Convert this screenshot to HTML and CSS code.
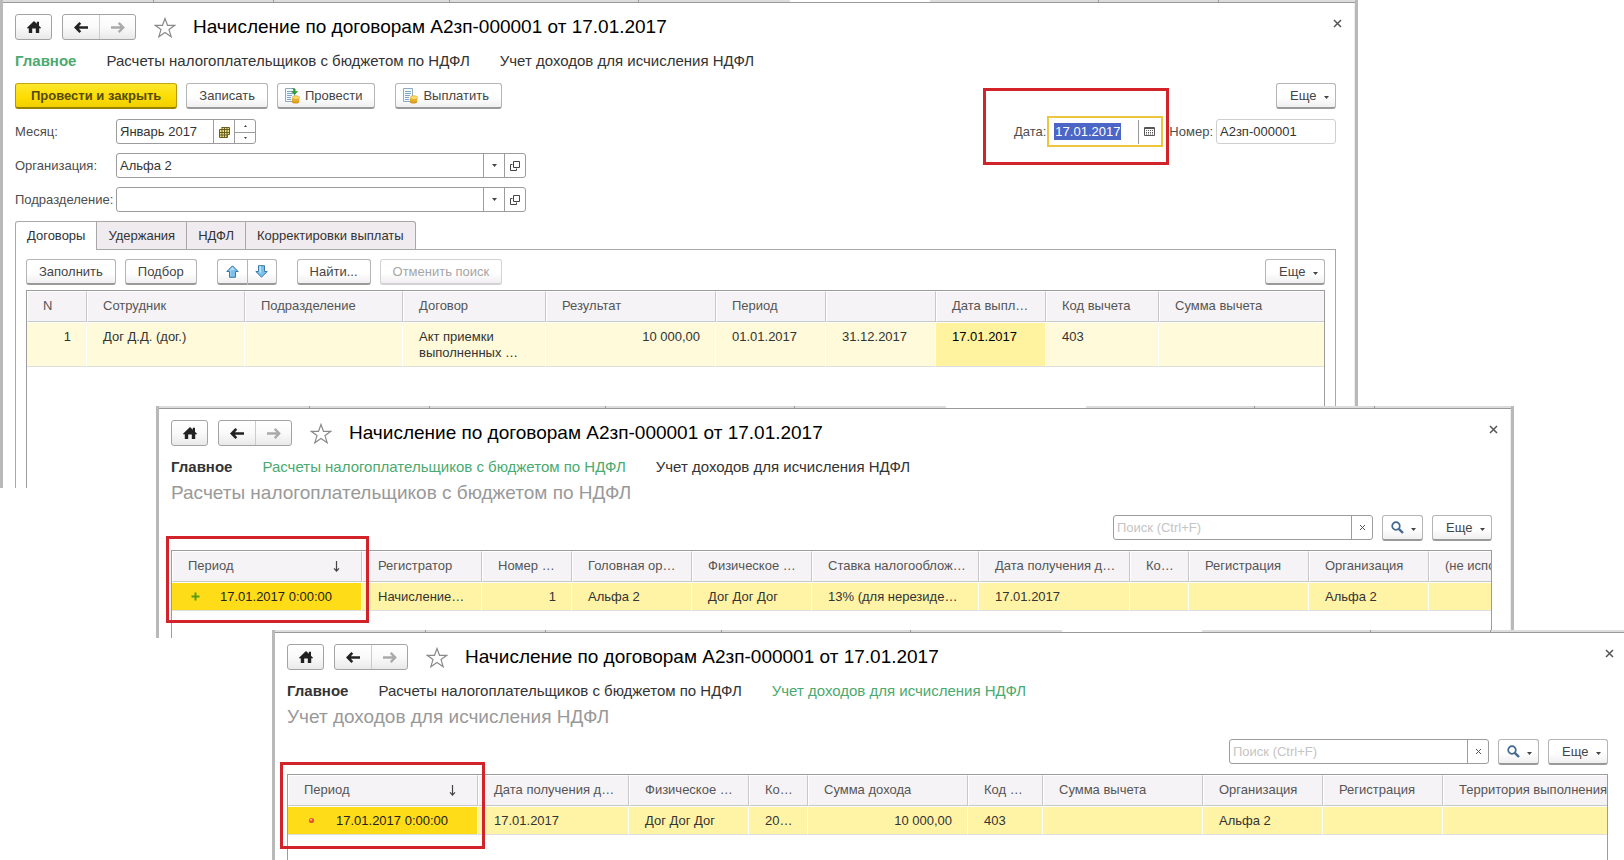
FILE: index.html
```html
<!DOCTYPE html>
<html lang="ru">
<head>
<meta charset="utf-8">
<meta name="viewport" content="width=device-width, initial-scale=1">
<title>Начисление по договорам А2зп-000001 от 17.01.2017</title>
<link rel="stylesheet" href="styles.css">
</head>
<body>
<svg class="sprite" aria-hidden="true">
  <symbol id="home" viewBox="0 0 14 12"><path fill="#222" d="M7 0 9.8 2.7V.8H12V4.8L14 6.7 13 7.8 12.2 7.1V12H8.8V7.6H5.2V12H1.8V7.1L1 7.8 0 6.7Z"/></symbol>
  <symbol id="left" viewBox="0 0 14 11"><path fill="none" stroke="#222" stroke-width="2.6" d="M6.3.9 1.8 5.5 6.3 10.1M2 5.5H14"/></symbol>
  <symbol id="right" viewBox="0 0 14 11"><path fill="none" stroke="#aaa" stroke-width="2.4" d="M7.7.9 12.2 5.5 7.7 10.1M12 5.5H0"/></symbol>
  <symbol id="star" viewBox="0 0 22 21"><path fill="#fff" stroke="#8a8a8a" stroke-width="1.2" d="M11 1.5 13.5 8.3H20.8L15 12.6 17.2 19.8 11 15.5 4.8 19.8 7 12.6 1.2 8.3H8.5Z"/></symbol>
  <symbol id="close" viewBox="0 0 11 11"><path fill="none" stroke="#555" stroke-width="1.5" d="M2 2 9 9M9 2 2 9"/></symbol>
  <symbol id="clear" viewBox="0 0 11 11"><path fill="none" stroke="#555" d="M3 3 8 8M8 3 3 8"/></symbol>
  <symbol id="caret" viewBox="0 0 5 3"><path fill="#444" d="M0 0H5L2.5 3Z"/></symbol>
  <symbol id="open" viewBox="0 0 10 10"><path fill="none" stroke="#444" d="M3.5.5H9.5V6.5H3.5ZM2.5 3.5H.5V9.5H6.5V7.5"/></symbol>
  <symbol id="months" viewBox="0 0 11 12"><path fill="#f0e28c" d="M3 1H10V9H8V11H1V4H3Z"/><path fill="none" stroke="#675e1c" d="M2.5 1.5H10.5V8.5H8.5V11.5H.5V3.5H10.5M.5 6.5H10.5M.5 9H8.5M3 1.5V11.5M5.5 1.5V11.5M8 1.5V11.5"/></symbol>
  <symbol id="calendar" viewBox="0 0 11 9"><path fill="none" stroke="#555" d="M.5.5H10.5V8.5H.5ZM.5 1.5H10.5"/><path fill="none" stroke="#555" stroke-dasharray="1 1" d="M2 3.5H9M2 5.5H9M2 7H9"/></symbol>
  <symbol id="doc" viewBox="0 0 16 16"><path fill="#f3f8fc" stroke="#8fa9bf" d="M1.5.5H10.5V13.5H1.5Z"/><path stroke="#7fa3c4" d="M3 3.5H9M3 5.5H9M3 7.5H8M3 9.5H7M3 11.5H7"/><ellipse cx="11.5" cy="13.5" rx="3.8" ry="2" fill="#d99a1c"/><ellipse cx="11.5" cy="11.5" rx="3.8" ry="2" fill="#e8b02c"/><ellipse cx="12" cy="9.6" rx="3.6" ry="1.9" fill="#fbdc6a" stroke="#d9a023" stroke-width=".6"/></symbol>
  <symbol id="post" viewBox="0 0 16 16"><use href="#doc"/><path fill="#2c9a35" d="M8 0 11.5 1V3.2H14.2L10.6 7 7 3.2H9.3V2Z"/></symbol>
  <symbol id="up" viewBox="0 0 13 13"><path fill="#7cc0ec" stroke="#3b78a8" d="M6.5.8 12.2 6.5H9.5V12.3H3.5V6.5H.8Z"/><path fill="#b9e2fa" d="M6.5 2.3 9 5H5V11H4.5V5.5H3.4Z"/></symbol>
  <symbol id="down" viewBox="0 0 13 13"><path fill="#7cc0ec" stroke="#3b78a8" d="M6.5 12.2 12.2 6.5H9.5V.7H3.5V6.5H.8Z"/><path fill="#b9e2fa" d="M4.2 1.3H6V8L4.2 7.2Z"/></symbol>
  <symbol id="search" viewBox="0 0 13 13"><circle cx="5" cy="5" r="3.8" fill="none" stroke="#41698f" stroke-width="1.7"/><path stroke="#41698f" stroke-width="2.4" d="M7.8 7.8 12 12"/></symbol>
  <symbol id="sort" viewBox="0 0 7 11"><path fill="none" stroke="#444" stroke-width="1.2" d="M3.5 0V10M1 7.3 3.5 10 6 7.3"/></symbol>
  <symbol id="plus" viewBox="0 0 9 9"><path stroke="#5a9b12" stroke-width="2" d="M4.5.5V8.5M.5 4.5H8.5"/></symbol>
  <symbol id="dot" viewBox="0 0 9 9"><circle cx="4.5" cy="4.5" r="2.6" fill="#e8532c"/><circle cx="4" cy="3.8" r="1" fill="#ffc3a0"/></symbol>
</svg>

<main class="desktop">
  <section class="window window-main">
    <header class="head">
      <button class="nav-btn home" aria-label="Начальная страница"><svg width="14" height="12"><use href="#home"/></svg></button>
      <div class="nav-pair">
        <button class="nav-btn" aria-label="Назад"><svg width="14" height="11"><use href="#left"/></svg></button>
        <button class="nav-btn" aria-label="Вперед"><svg width="14" height="11"><use href="#right"/></svg></button>
      </div>
      <button class="plain star" aria-label="В избранное"><svg width="22" height="21"><use href="#star"/></svg></button>
      <h1>Начисление по договорам А2зп-000001 от 17.01.2017</h1>
      <button class="plain close" aria-label="Закрыть"><svg width="11" height="11"><use href="#close"/></svg></button>
    </header>
    <nav class="sections">
      <a href="#" class="main current">Главное</a>
      <a href="#">Расчеты налогоплательщиков с бюджетом по НДФЛ</a>
      <a href="#">Учет доходов для исчисления НДФЛ</a>
    </nav>

    <div class="commands">
      <button class="btn primary">Провести и закрыть</button>
      <button class="btn">Записать</button>
      <button class="btn icon-btn"><svg width="16" height="16"><use href="#post"/></svg>Провести</button>
      <button class="btn icon-btn apart">
        <svg width="16" height="16"><use href="#doc"/></svg>Выплатить</button>
      <button class="btn more">Еще<svg width="5" height="3"><use href="#caret"/></svg></button>
    </div>

    <div class="form">
      <div class="row">
        <label for="month">Месяц:</label>
        <div class="field month">
          <input id="month" value="Январь 2017">
          <button aria-label="Выбрать месяц"><svg width="11" height="12"><use href="#months"/></svg></button>
          <div class="spin">
            <button aria-label="Следующий"><svg class="flip" width="3" height="2"><use href="#caret"/></svg></button>
            <button aria-label="Предыдущий"><svg width="3" height="2"><use href="#caret"/></svg></button>
          </div>
        </div>
        <div class="doc-id">
          <div class="date-group">
            <label for="date">Дата:</label>
            <div class="date-field">
              <input id="date" value="17.01.2017">
              <button aria-label="Календарь"><svg width="11" height="9"><use href="#calendar"/></svg></button>
            </div>
          </div>
          <label for="number" class="number-label">Номер:</label>
          <input id="number" class="number" value="А2зп-000001">
        </div>
      </div>
      <div class="row">
        <label for="org">Организация:</label>
        <div class="field wide">
          <input id="org" value="Альфа 2">
          <button aria-label="Выбрать"><svg width="5" height="3"><use href="#caret"/></svg></button>
          <button aria-label="Открыть"><svg width="10" height="10"><use href="#open"/></svg></button>
        </div>
      </div>
      <div class="row">
        <label for="dept">Подразделение:</label>
        <div class="field wide">
          <input id="dept" value="">
          <button aria-label="Выбрать"><svg width="5" height="3"><use href="#caret"/></svg></button>
          <button aria-label="Открыть"><svg width="10" height="10"><use href="#open"/></svg></button>
        </div>
      </div>
    </div>

    <div class="tabs" role="tablist">
      <button role="tab" aria-selected="true" class="tab active">Договоры</button>
      <button role="tab" class="tab">Удержания</button>
      <button role="tab" class="tab">НДФЛ</button>
      <button role="tab" class="tab">Корректировки выплаты</button>
    </div>
    <div class="pane">
      <div class="toolbar">
        <button class="btn">Заполнить</button>
        <button class="btn">Подбор</button>
        <div class="btn-pair">
          <button class="btn" aria-label="Вверх"><svg width="13" height="13"><use href="#up"/></svg></button>
          <button class="btn" aria-label="Вниз"><svg width="13" height="13"><use href="#down"/></svg></button>
        </div>
        <button class="btn apart">Найти...</button>
        <button class="btn" disabled>Отменить поиск</button>
        <button class="btn more">Еще<svg width="5" height="3"><use href="#caret"/></svg></button>
      </div>
      <div class="grid contracts">
        <table>
          <colgroup><col class="w60"><col class="w158"><col class="w158"><col class="w143"><col class="w170"><col class="w110"><col class="w110"><col class="w110"><col class="w113"><col></colgroup>
          <thead><tr><th>N</th><th>Сотрудник</th><th>Подразделение</th><th>Договор</th><th>Результат</th><th>Период</th><th></th><th>Дата выпл…</th><th>Код вычета</th><th>Сумма вычета</th></tr></thead>
          <tbody><tr><td class="num">1</td><td>Дог Д.Д. (дог.)</td><td></td><td>Акт приемки<br>выполненных …</td><td class="num">10 000,00</td><td>01.01.2017</td><td>31.12.2017</td><td class="cell-current">17.01.2017</td><td>403</td><td></td></tr></tbody>
        </table>
      </div>
    </div>
  </section>

  <section class="window window-tax">
    <header class="head">
      <button class="nav-btn home" aria-label="Начальная страница"><svg width="14" height="12"><use href="#home"/></svg></button>
      <div class="nav-pair">
        <button class="nav-btn" aria-label="Назад"><svg width="14" height="11"><use href="#left"/></svg></button>
        <button class="nav-btn" aria-label="Вперед"><svg width="14" height="11"><use href="#right"/></svg></button>
      </div>
      <button class="plain star" aria-label="В избранное"><svg width="22" height="21"><use href="#star"/></svg></button>
      <h1>Начисление по договорам А2зп-000001 от 17.01.2017</h1>
      <button class="plain close" aria-label="Закрыть"><svg width="11" height="11"><use href="#close"/></svg></button>
    </header>
    <nav class="sections">
      <a href="#" class="main">Главное</a>
      <a href="#" class="current">Расчеты налогоплательщиков с бюджетом по НДФЛ</a>
      <a href="#">Учет доходов для исчисления НДФЛ</a>
    </nav>
    <h2>Расчеты налогоплательщиков с бюджетом по НДФЛ</h2>
    <div class="finder">
      <div class="field search">
        <input aria-label="Поиск" placeholder="Поиск (Ctrl+F)">
        <button aria-label="Очистить"><svg width="11" height="11"><use href="#clear"/></svg></button>
      </div>
      <button class="btn lens" aria-label="Найти"><svg width="13" height="13"><use href="#search"/></svg><svg width="5" height="3"><use href="#caret"/></svg></button>
      <button class="btn more">Еще<svg width="5" height="3"><use href="#caret"/></svg></button>
    </div>
    <div class="marked">
      <div class="grid register">
        <table>
          <colgroup><col class="w190"><col class="w120"><col class="w90"><col class="w120"><col class="w120"><col class="w167"><col class="w151"><col class="w59"><col class="w120"><col class="w120"><col></colgroup>
          <thead><tr><th><span class="sorted">Период<svg width="7" height="11"><use href="#sort"/></svg></span></th><th>Регистратор</th><th>Номер …</th><th>Головная ор…</th><th>Физическое …</th><th>Ставка налогооблож…</th><th>Дата получения д…</th><th>Ко…</th><th>Регистрация</th><th>Организация</th><th>(не испо</th></tr></thead>
          <tbody><tr><td class="selected"><span class="stamp"><svg width="9" height="9"><use href="#plus"/></svg>17.01.2017 0:00:00</span></td><td>Начисление…</td><td class="num">1</td><td>Альфа 2</td><td>Дог Дог Дог</td><td>13% (для нерезиде…</td><td>17.01.2017</td><td></td><td></td><td>Альфа 2</td><td></td></tr></tbody>
        </table>
      </div>
      <div class="marker marker-tax"></div>
    </div>
  </section>

  <section class="window window-income">
    <header class="head">
      <button class="nav-btn home" aria-label="Начальная страница"><svg width="14" height="12"><use href="#home"/></svg></button>
      <div class="nav-pair">
        <button class="nav-btn" aria-label="Назад"><svg width="14" height="11"><use href="#left"/></svg></button>
        <button class="nav-btn" aria-label="Вперед"><svg width="14" height="11"><use href="#right"/></svg></button>
      </div>
      <button class="plain star" aria-label="В избранное"><svg width="22" height="21"><use href="#star"/></svg></button>
      <h1>Начисление по договорам А2зп-000001 от 17.01.2017</h1>
      <button class="plain close" aria-label="Закрыть"><svg width="11" height="11"><use href="#close"/></svg></button>
    </header>
    <nav class="sections">
      <a href="#" class="main">Главное</a>
      <a href="#">Расчеты налогоплательщиков с бюджетом по НДФЛ</a>
      <a href="#" class="current">Учет доходов для исчисления НДФЛ</a>
    </nav>
    <h2>Учет доходов для исчисления НДФЛ</h2>
    <div class="finder">
      <div class="field search">
        <input aria-label="Поиск" placeholder="Поиск (Ctrl+F)">
        <button aria-label="Очистить"><svg width="11" height="11"><use href="#clear"/></svg></button>
      </div>
      <button class="btn lens" aria-label="Найти"><svg width="13" height="13"><use href="#search"/></svg><svg width="5" height="3"><use href="#caret"/></svg></button>
      <button class="btn more">Еще<svg width="5" height="3"><use href="#caret"/></svg></button>
    </div>
    <div class="marked">
      <div class="grid register">
        <table>
          <colgroup><col class="w190"><col class="w151"><col class="w120"><col class="w59"><col class="w160"><col class="w75"><col class="w160"><col class="w120"><col class="w120"><col></colgroup>
          <thead><tr><th><span class="sorted">Период<svg width="7" height="11"><use href="#sort"/></svg></span></th><th>Дата получения д…</th><th>Физическое …</th><th>Ко…</th><th>Сумма дохода</th><th>Код …</th><th>Сумма вычета</th><th>Организация</th><th>Регистрация</th><th>Территория выполнения</th></tr></thead>
          <tbody><tr><td class="selected"><span class="stamp"><svg width="9" height="9"><use href="#dot"/></svg>17.01.2017 0:00:00</span></td><td>17.01.2017</td><td>Дог Дог Дог</td><td>20…</td><td class="num">10 000,00</td><td>403</td><td></td><td>Альфа 2</td><td></td><td></td></tr></tbody>
        </table>
      </div>
      <div class="marker marker-income"></div>
    </div>
  </section>
</main>
</body>
</html>
```
FILE: styles.css
```css
* { box-sizing: border-box; }

body {
  margin: 0;
  background: #fff;
  color: #333;
  font: 13px/16px "Liberation Sans", Arial, sans-serif;
}

button, input { font: inherit; color: inherit; }
button { margin: 0; padding: 0; border: 0; background: none; }
input { min-width: 0; border: 0; outline: 0; background: none; padding: 0 3px; }
svg { display: block; flex: none; }
.sprite { position: absolute; width: 0; height: 0; }

.desktop { position: relative; min-height: 100vh; overflow: hidden; }

/* Windows */
.window {
  position: absolute;
  display: flex;
  flex-direction: column;
  padding: 14px 19px 0 12px;
  background: #fff;
  border-left: 3px solid #b9b9b9;
  border-right: 3px solid #b9b9b9;
  box-shadow: inset -1px 0 #ededed;
}
.window::before {
  content: "";
  position: absolute;
  inset: 0 0 auto 0;
  height: 2px;
  border-bottom: 1px solid #999;
  background: linear-gradient(90deg,
    #ddd 150px, #999 150px 151px, #ddd 151px 270px, #999 270px 271px,
    #ddd 271px 446px, #999 446px 447px, #ddd 447px 635px, #999 635px 636px,
    #ddd 636px 787px, #fff 787px 927px, #ddd 927px 1095px, #999 1095px 1096px,
    #ddd 1096px 1215px, #999 1215px 1216px, #ddd 1216px);
}
.window-main { top: 0; left: 0; right: 266px; }
.window-tax { top: 406px; left: 156px; right: 110px; }
.window-income { top: 630px; left: 272px; right: -6px; bottom: 0; }

.head { display: flex; align-items: center; margin-right: -7px; height: 26px; }
.nav-btn {
  display: flex;
  align-items: center;
  justify-content: center;
  width: 36px;
  height: 24px;
}
.home, .nav-pair {
  height: 26px;
  border: 1px solid #a3a3a3;
  border-radius: 3px;
  background: linear-gradient(#fff, #fafafa 50%, #e9e9e9);
}
.home { width: 37px; }
.nav-pair { display: flex; width: 74px; margin-left: 10px; }
.nav-pair .nav-btn + .nav-btn { border-left: 1px solid #ccc; }
.star { margin: 0 17px 0 18px; }
.close { align-self: flex-start; margin: 4px 0 0 auto; }
h1, h2 { margin: 0; font-size: 19px; line-height: 24px; font-weight: 400; white-space: nowrap; }
h1 { color: #000; }
h2 { margin-top: 5px; color: #999; }

.sections { display: flex; gap: 30px; margin-top: 12px; font-size: 15px; line-height: 18px; white-space: nowrap; }
.sections a { color: #333; text-decoration: none; }
.sections .main { font-weight: 700; }
.sections .current { color: #4aaa70; }

/* Buttons */
.btn {
  display: flex;
  align-items: center;
  justify-content: center;
  height: 26px;
  padding: 0 12px;
  border: 1px solid #b5b5b5;
  border-bottom: 2px solid #999;
  border-radius: 3px;
  background: linear-gradient(#fff 55%, #f1eff1);
  color: #444;
  white-space: nowrap;
}
.btn:disabled { border-color: #d2d2d2; color: #a5a5a5; }
.primary {
  padding: 0 15px;
  border-color: #c5a90c #b39800 #988200;
  background: linear-gradient(#ffe72e, #fcdc00 60%, #f0cf00);
  color: #554a00;
  font-weight: 700;
}
.icon-btn { gap: 5px; padding: 0 12px 0 6px; }
.more { width: 60px; padding: 0 6px 0 13px; justify-content: space-between; margin-left: auto; }
.more svg, .lens svg + svg { margin-top: 3px; }
.commands, .toolbar, .finder { display: flex; gap: 9px; }
.commands { margin-top: 13px; }
.apart { margin-left: 11px; }
.btn-pair { display: flex; margin-left: 11px; }
.btn-pair .btn { width: 30px; padding: 0; }
.btn-pair .btn:first-child { border-radius: 3px 0 0 3px; border-right: 0; }
.btn-pair .btn:last-child { border-radius: 0 3px 3px 0; }

/* Form fields */
.form { display: grid; gap: 9px; margin-top: 10px; }
.row { display: flex; align-items: center; height: 25px; }
label { color: #4d4d4d; white-space: nowrap; }
.row > label { width: 101px; }
.field { display: flex; height: 25px; border: 1px solid #9c9c9c; border-radius: 3px; background: #fff; }
.field input { flex: 1; }
.field button {
  display: flex;
  align-items: center;
  justify-content: center;
  width: 21px;
  border-left: 1px solid #9c9c9c;
}
.month { width: 140px; }
.wide { width: 410px; }
.spin { display: grid; grid-template-rows: 1fr 1fr; }
.spin button + button { border-top: 1px solid #9c9c9c; }
.flip { transform: rotate(180deg); }

.doc-id { display: flex; align-items: center; margin-left: auto; }
.date-group { position: relative; display: flex; align-items: center; gap: 4px; }
.date-group::after {
  content: "";
  position: absolute;
  inset: -31px -9px -21px -31px;
  border: 3px solid #d2232a;
  pointer-events: none;
}
.date-field {
  display: flex;
  align-items: center;
  justify-content: space-between;
  width: 110px;
  height: 25px;
  padding-left: 4px;
  box-shadow: 0 0 0 1px #fff, 0 0 0 3px #ecc73e;
}
.date-field input { width: 67px; height: 17px; padding: 0 1px; background: #4b66c6; color: #fff; }
.date-field button { display: flex; align-items: center; justify-content: center; width: 22px; height: 24px; border-left: 1px solid #999; }
.number-label { margin: 0 3px 0 9px; }
.number { width: 120px; height: 25px; border: 1px solid #cfcfcf; border-radius: 3px; }

/* Tabs */
.tabs { display: flex; margin-top: 9px; height: 28px; }
.tab { padding: 0 11px; border: 1px solid #a8a8a8; border-left-width: 0; border-bottom: 0; background: #efebef; color: #333; }
.tab:last-child { border-top-right-radius: 3px; }
.tab.active { position: relative; z-index: 1; margin-bottom: -1px; border-left-width: 1px; border-top-left-radius: 3px; background: #fff; }
.pane { padding: 9px 10px 0; border: 1px solid #a8a8a8; border-bottom: 0; }
.toolbar { margin-bottom: 5px; }

/* Search row */
.finder { justify-content: flex-end; margin-top: 10px; }
.finder .more { margin-left: 0; }
.search { width: 260px; }
.search input::placeholder { color: #c4c4c4; opacity: 1; }
.lens { width: 41px; padding: 0 6px 0 8px; justify-content: space-between; }

/* Tables */
.grid { border: 1px solid #9c9c9c; border-bottom: 0; overflow: hidden; }
.contracts { min-height: 198px; }
.register { min-height: 88px; }
table { width: 100%; table-layout: fixed; border-spacing: 0; }
th, td { padding: 0 0 0 15px; text-align: left; white-space: nowrap; overflow: hidden; font-weight: 400; }
th { height: 31px; padding-bottom: 1px; border: 1px solid #fff; border-right-color: #c8c8c8; border-bottom-color: #c8c8c8; background: #f6f3f6; color: #555; }
td { height: 29px; border: 1px solid #fff; border-left: 0; border-bottom-color: #dedede; padding-left: 16px; background: #fff3a6; }
th:last-child, td:last-child { border-right: 0; }
.contracts td { height: 45px; padding-top: 6px; vertical-align: top; background: #fffada; }
td.num { padding-right: 15px; text-align: right; }
.contracts .cell-current { background: #fff3a0; color: #000; }
.register .selected { background: #ffdc18; color: #222; }
.sorted { display: flex; justify-content: space-between; align-items: center; padding-right: 21px; }
.stamp { display: flex; align-items: center; gap: 20px; padding-left: 3px; }

.marked { position: relative; flex: 1; margin-top: 9px; }
.marker { position: absolute; height: 87px; border: 3px solid #d2232a; pointer-events: none; }
.marker-tax { top: -14px; left: -5px; width: 203px; }
.marker-income { top: -12px; left: -7px; width: 205px; }

.w59 { width: 59px; }
.w60 { width: 60px; }
.w75 { width: 75px; }
.w90 { width: 90px; }
.w110 { width: 110px; }
.w113 { width: 113px; }
.w120 { width: 120px; }
.w143 { width: 143px; }
.w151 { width: 151px; }
.w158 { width: 158px; }
.w160 { width: 160px; }
.w167 { width: 167px; }
.w170 { width: 170px; }
.w190 { width: 190px; }
```
